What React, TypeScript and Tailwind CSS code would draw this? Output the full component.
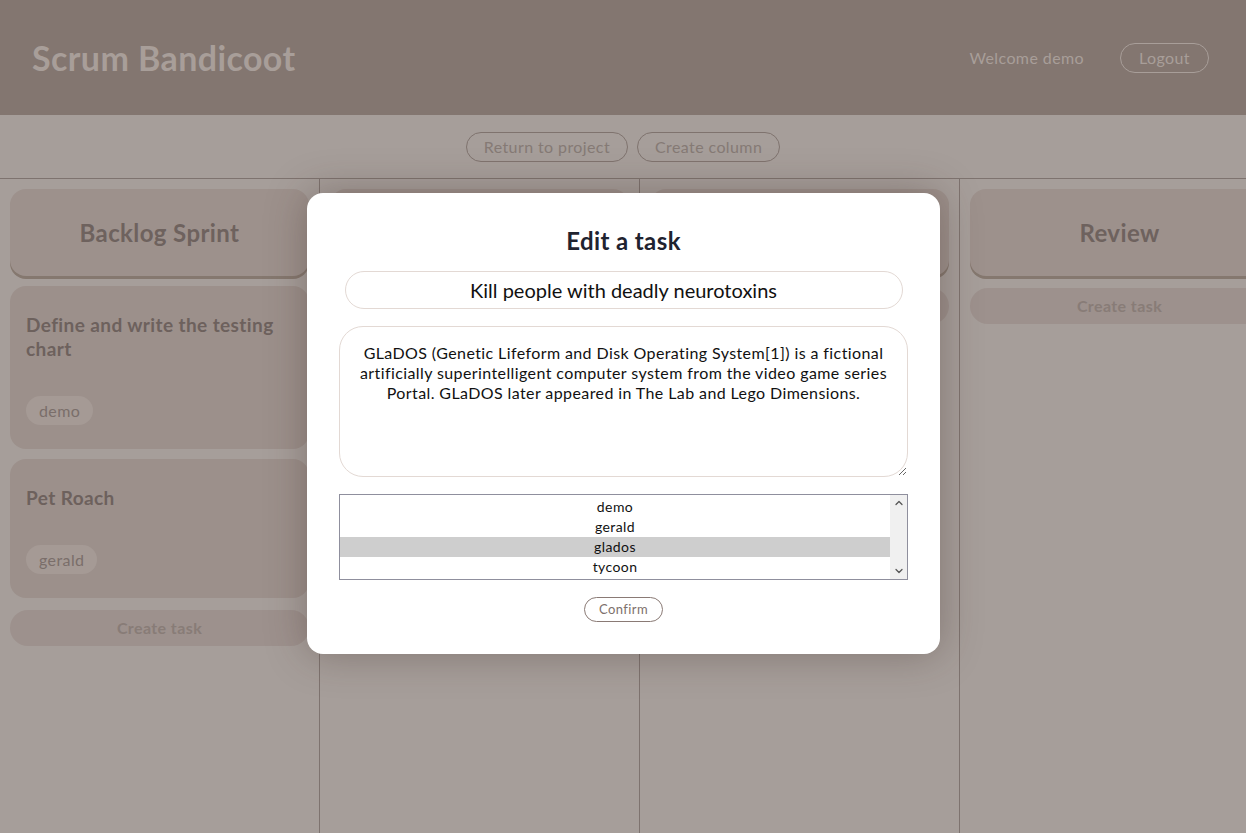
import { ChevronDown, ChevronUp } from "lucide-react";

const font = { fontFamily: "Lato, 'Noto Sans', sans-serif" };

type Task = { title: string; user: string };
type Column = { name: string; tasks: Task[] };

const columns: Column[] = [
  {
    name: "Backlog Sprint",
    tasks: [
      { title: "Define and write the testing chart", user: "demo" },
      { title: "Pet Roach", user: "gerald" },
    ],
  },
  { name: "To do", tasks: [] },
  { name: "In progress", tasks: [] },
  { name: "Review", tasks: [] },
];

function TaskCard({ task }: { task: Task }) {
  return (
    <div className="rounded-2xl bg-[#9c908b] px-4 pt-[27px] pb-6">
      <h4 className="text-[19px] font-bold leading-6 text-[#6d615d]">{task.title}</h4>
      <div className="mt-[35px] flex">
        <span className="rounded-full bg-[#a59a95] px-[13px] py-[5px] text-[16px] leading-[19px] text-[#7a6e6a]">
          {task.user}
        </span>
      </div>
    </div>
  );
}

function BoardColumn({ col }: { col: Column }) {
  return (
    <div className="flex w-[320px] shrink-0 flex-col gap-[10px] border-r border-[#7e736f] px-[10px] pt-[10px]">
      <div className="flex h-[87px] items-center justify-center rounded-2xl bg-[#9d918c] shadow-[0_3px_0_#85786f]">
        <h3 className="text-[24px] font-bold text-[#6e625e]">{col.name}</h3>
      </div>
      {col.tasks.map((t, i) => (
        <TaskCard key={i} task={t} />
      ))}
      <button className="mt-[2px] h-[36px] rounded-full bg-[#9d918d] text-[16px] font-bold text-[#887c77]">
        Create task
      </button>
    </div>
  );
}

export default function App() {
  const users = ["demo", "gerald", "glados", "tycoon"];
  return (
    <div style={font} className="relative h-[833px] w-full overflow-hidden bg-[#a69e9a] tracking-[0.025em]">
      <header className="flex h-[115px] items-center justify-between bg-[#837670] pl-8 pr-[37px]">
        <h1 className="text-[34px] font-bold text-[#a89e99]">Scrum Bandicoot</h1>
        <div className="flex items-center gap-[36px]">
          <span className="text-[16px] text-[#a89e99]">Welcome demo</span>
          <button className="h-[30px] rounded-full border border-[#a89e99] px-[18px] text-[16px] text-[#a89e99]">
            Logout
          </button>
        </div>
      </header>

      <div className="flex h-[64px] items-center justify-center gap-[9px] border-b border-[#7e736f]">
        <button className="h-[30px] rounded-full border border-[#7f736e] px-[17px] text-[16px] text-[#857a75]">
          Return to project
        </button>
        <button className="h-[30px] rounded-full border border-[#7f736e] px-[17px] text-[16px] text-[#857a75]">
          Create column
        </button>
      </div>

      <div className="flex h-[655px] overflow-hidden">
        {columns.map((c) => (
          <BoardColumn key={c.name} col={c} />
        ))}
      </div>

      {/* edit modal */}
      <div className="absolute left-[307px] top-[193px] flex w-[633px] flex-col items-center rounded-2xl bg-white px-8 pt-[34px] pb-8 shadow-[0_0_40px_rgba(60,40,35,0.35)]">
        <h2 className="text-[24px] font-bold leading-7 text-[#1f2330]">Edit a task</h2>
        <input
          readOnly
          value="Kill people with deadly neurotoxins"
          className="mt-4 h-[38px] w-[558px] rounded-full border border-[#e3d9d4] text-center text-[20px] tracking-normal text-[#111] outline-none"
        />
        <textarea
          readOnly
          value="GLaDOS (Genetic Lifeform and Disk Operating System[1]) is a fictional artificially superintelligent computer system from the video game series Portal. GLaDOS later appeared in The Lab and Lego Dimensions."
          className="mt-[17px] h-[151px] w-[569px] rounded-3xl border border-[#e3d9d4] px-4 pt-[16px] text-center text-[16px] leading-5 text-[#111] outline-none"
        />
        <div className="mt-[17px] flex h-[86px] w-[569px] border border-[#8f8f9d] bg-white">
          <div className="flex flex-1 flex-col py-[2px]">
            {users.map((u) => (
              <div
                key={u}
                className={
                  "h-[20px] text-center text-[14px] leading-5 text-[#111] " +
                  (u === "glados" ? "bg-[#cecece]" : "")
                }
              >
                {u}
              </div>
            ))}
          </div>
          <div className="flex w-[17px] flex-col items-center justify-between bg-[#f0f0f0] py-[2px]">
            <ChevronUp className="h-3 w-3 text-[#555]" strokeWidth={2.5} />
            <ChevronDown className="h-3 w-3 text-[#555]" strokeWidth={2.5} />
          </div>
        </div>
        <button className="mt-[17px] h-[25px] rounded-full border border-[#8a7a75] px-[14px] text-[13px] text-[#7d706b]">
          Confirm
        </button>
      </div>
    </div>
  );
}
